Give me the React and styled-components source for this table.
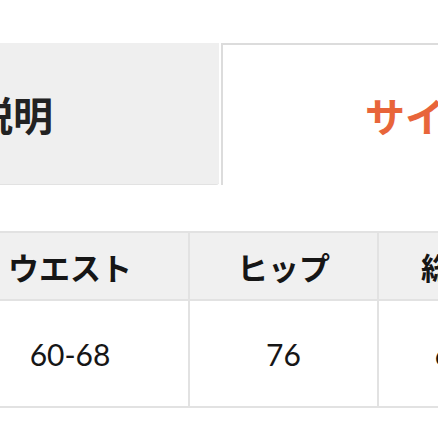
import React from "react";
import styled, { createGlobalStyle } from "styled-components";

const Global = createGlobalStyle`
  html, body { margin: 0; padding: 0; background: #ffffff; }
  body { font-family: "Lato", "Noto Sans CJK JP", sans-serif; color: #1a1a1a; overflow: hidden; }
  * { box-sizing: border-box; }
`;

const Page = styled.div`
  width: 438px;
  height: 438px;
  overflow: hidden;
  padding-top: 43px;
`;

const TabBar = styled.div`
  display: flex;
  height: 142px;
`;

const Tab = styled.div`
  display: flex;
  align-items: center;
  justify-content: ${(p) => (p.$active ? "flex-start" : "flex-end")};
  overflow: hidden;
  white-space: nowrap;
  font-family: "Noto Sans CJK JP", sans-serif;
  font-size: 40px;
  font-weight: 600;
  ${(p) =>
    p.$active
      ? `
    flex: 1;
    margin-left: 2px;
    background: #ffffff;
    border-left: 2px solid #dcdcdc;
    border-top: 2px solid #dcdcdc;
    color: #e8653a;
    padding-left: 142px;
  `
      : `
    width: 219px;
    flex: none;
    background: #efefef;
    border-bottom: 1px solid #e2e2e2;
    border-bottom-right-radius: 3px;
    color: #222222;
    padding-right: 166px;
  `}
`;

const Table = styled.div`
  display: grid;
  grid-template-columns: 238px 189px 148px;
  grid-template-rows: 68px 107px;
  margin-top: 46px;
  margin-left: -48px;
  border-top: 2px solid #e2e2e2;
`;

const Cell = styled.div`
  display: flex;
  align-items: center;
  justify-content: center;
  white-space: nowrap;
  border-right: 2px solid #e2e2e2;
  border-bottom: 2px solid #e2e2e2;
  background: ${(p) => (p.$head ? "#f0f0f0" : "#ffffff")};
  font-family: ${(p) =>
    p.$head ? `"Noto Sans CJK JP", sans-serif` : `"Lato", "Noto Sans CJK JP", sans-serif`};
  font-size: ${(p) => (p.$head ? "31px" : "30px")};
  font-weight: ${(p) => (p.$head ? 700 : 400)};
  color: #161616;
`;

const headers = ["ウエスト", "ヒップ", "総丈"];
const values = ["60-68", "76", "64"];

export default function App() {
  return (
    <>
      <Global />
      <Page>
        <TabBar>
          <Tab>商品説明</Tab>
          <Tab $active>サイズ表</Tab>
        </TabBar>
        <Table>
          {headers.map((h) => (
            <Cell key={h} $head>
              {h}
            </Cell>
          ))}
          {values.map((v, i) => (
            <Cell key={i}>{v}</Cell>
          ))}
        </Table>
      </Page>
    </>
  );
}
